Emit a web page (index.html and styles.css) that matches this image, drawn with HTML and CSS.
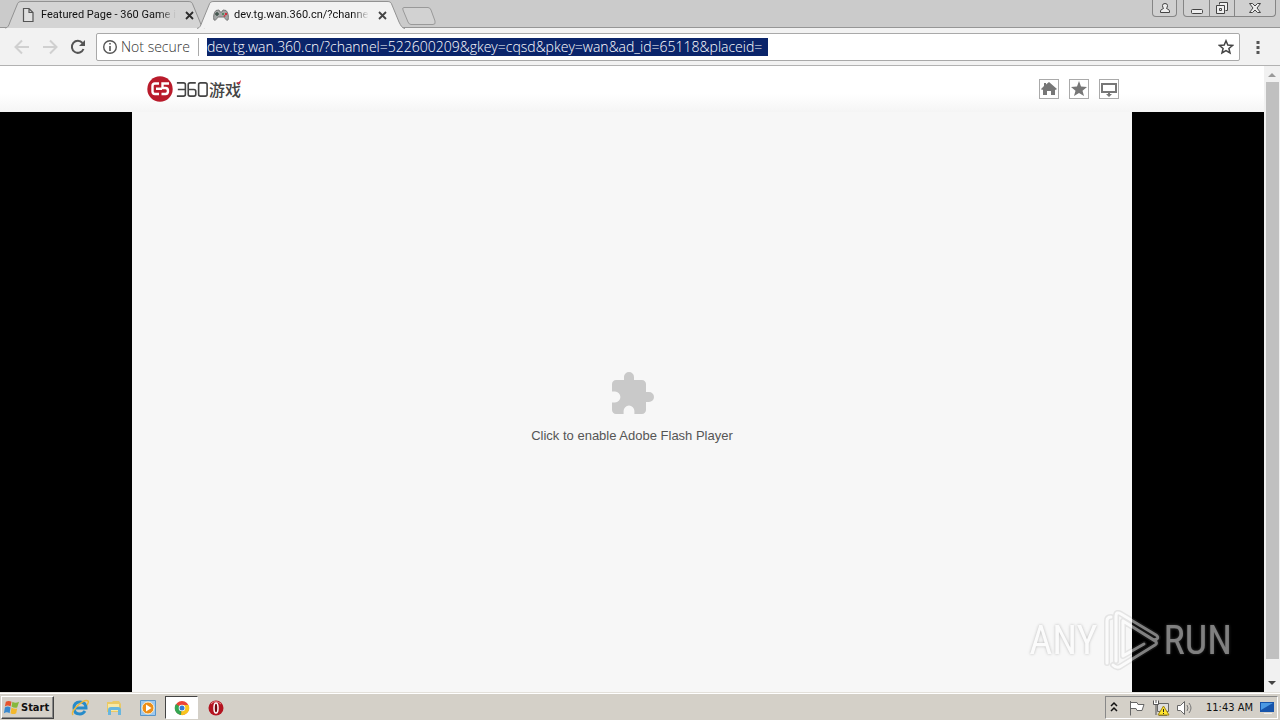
FILE: index.html
```html
<!DOCTYPE html>
<html lang="en">
<head>
<meta charset="utf-8">
<title>dev.tg.wan.360.cn</title>
<link rel="stylesheet" href="styles.css">
</head>
<body>
<header class="tabstrip">
  <div class="tab">
    <svg class="tab-shape" viewBox="0 0 200 28" preserveAspectRatio="none"><path d="M0 28C3 28 4 25 5 22L12 5C13 2 14 1.500 17 1.500H183C186 1.500 187 2 188 5L195 22C196 25 197 28 200 28" fill="#d4d4d4" stroke="#929292"/></svg>
    <svg class="tab-icon" viewBox="0 0 16 16"><path d="M3.500 1.500H9L13 5.500V14.500H3.500ZM9 1.500V5.500H13" fill="#e0e0e0" stroke="#555" stroke-width="1.200"/></svg>
    <span class="tab-title">Featured Page - 360 Game i</span>
    <button class="tab-close" aria-label="Close tab"><svg viewBox="0 0 9 9"><path d="M1 1L8 8M8 1L1 8" stroke="#2c2c2c" stroke-width="1.800"/></svg></button>
  </div>
  <div class="tab tab-active">
    <svg class="tab-shape" viewBox="0 0 208 28" preserveAspectRatio="none"><path d="M0 28.500C3 28 4 25 5 22L12 5C13 2 14 1.500 17 1.500H190C193 1.500 194 2 195 5L202 22C204 26 205 28 208 28.500" fill="#f2f2f2" stroke="#929292"/></svg>
    <svg class="tab-icon" viewBox="0 0 16 16"><path d="M1 13C0 10 1 5 3 3.500L6 3L7 5H9L10 3L13 3.500C15 5 16 10 15 13C13 14 12 11 11 10H5C4 11 3 14 1 13Z" fill="#a3a6a6" stroke="#777"/><path d="M4 5V9M2 7H6" stroke="#3f514a" stroke-width="1.500"/><circle cx="10" cy="7" r="1" fill="#397f4f"/><circle cx="13" cy="7" r="1.200" fill="#d62d3b"/><circle cx="11.500" cy="9" r="1" fill="#c7404a"/></svg>
    <span class="tab-title">dev.tg.wan.360.cn/?channe</span>
    <button class="tab-close" aria-label="Close tab"><svg viewBox="0 0 9 9"><path d="M1 1L8 8M8 1L1 8" stroke="#444" stroke-width="1.800"/></svg></button>
  </div>
  <button class="new-tab" aria-label="New tab"><svg viewBox="0 0 36 20"><path d="M3 1.500H27Q29 1.500 30 4L34 15Q35 18.500 32 18.500H10Q8 18.500 7 16L2 4Q1 1.500 3 1.500Z" fill="#d2d2d2" stroke="#999"/></svg></button>
  <div class="window-controls">
    <button class="profile" aria-label="Profile"><svg viewBox="0 0 12 12"><path d="M1.500 10.500V9Q1.500 7.500 4.500 6.500Q3.500 5 3.500 3.500Q3.500 1.500 6 1.500T8.500 3.500Q8.500 5 7.500 6.500Q10.500 7.500 10.500 9V10.500Z" fill="#eee" stroke="#444"/></svg></button>
    <div class="window-buttons">
      <button aria-label="Minimize"><svg viewBox="0 0 14 14"><rect x="1.500" y="8.500" width="11" height="4" rx="1" fill="#eee" stroke="#444"/></svg></button>
      <button aria-label="Restore"><svg viewBox="0 0 14 14"><path d="M4.500 3.500V1.500H12.500V9.500H10.500" fill="#eee" stroke="#444"/><path d="M1.500 4.500H9.500V12.500H1.500ZM4.500 7.500H6.500V9.500H4.500Z" fill="#eee" stroke="#444"/></svg></button>
      <button class="window-close" aria-label="Close"><svg viewBox="0 0 14 14"><path d="M1.500 2.500H4.500L7 5L9.500 2.500H12.500L9 7L12.500 11.500H9.500L7 9L4.500 11.500H1.500L5 7Z" fill="#eee" stroke="#444"/></svg></button>
    </div>
  </div>
</header>
<nav class="toolbar">
  <button class="nav-button" aria-label="Back"><svg viewBox="0 0 16 16"><path d="M15 8H2M8 1.500L1.500 8L8 14.500" fill="none" stroke="#d0d0d0" stroke-width="2"/></svg></button>
  <button class="nav-button" aria-label="Forward"><svg viewBox="0 0 16 16"><path d="M1 8H14M8 1.500L14.500 8L8 14.500" fill="none" stroke="#d0d0d0" stroke-width="2"/></svg></button>
  <button class="nav-button" aria-label="Reload"><svg viewBox="0 0 16 16"><path d="M13.500 10A6 6 0 1 1 12.500 4" fill="none" stroke="#555" stroke-width="2"/><path d="M15 1V7H9Z" fill="#555"/></svg></button>
  <div class="address">
    <svg class="info" viewBox="0 0 16 16"><circle cx="8" cy="8" r="6.300" fill="none" stroke="#555" stroke-width="1.400"/><path d="M8 7V12M8 4V5.600" stroke="#555" stroke-width="1.600"/></svg>
    <label class="security" for="url">Not secure</label>
    <input class="url" id="url" type="text" spellcheck="false" value="dev.tg.wan.360.cn/?channel=522600209&amp;gkey=cqsd&amp;pkey=wan&amp;ad_id=65118&amp;placeid=">
    <button class="bookmark" aria-label="Bookmark"><svg viewBox="0 0 16 16"><path d="M8 1.800L9.800 6.100L14.500 6.500L10.900 9.500L12 14L8 11.600L4 14L5.100 9.500L1.500 6.500L6.200 6.100Z" fill="none" stroke="#444" stroke-width="1.500"/></svg></button>
  </div>
  <button class="menu" aria-label="Menu"><svg viewBox="0 0 4 14"><path d="M.5 1h3v3h-3zM.5 6h3v3h-3zM.5 11h3v3h-3z" fill="#555"/></svg></button>
</nav>
<main class="viewport">
  <div class="page">
    <div class="site-header">
      <div class="site-inner">
        <a class="logo" href="#" aria-label="360游戏">
          <svg class="logo-mark" viewBox="0 0 26 26"><circle cx="13" cy="13" r="12.700" fill="#b91b2b"/><path d="M12 7.500H8Q5.500 7.500 5.500 10V15.500Q5.500 18 8 18H12M22 7.500H15.500V12H18.500Q21 12 21 15T18.500 18H14.500M9 12.700H15" fill="none" stroke="#fff" stroke-width="2.400"/></svg>
          <svg class="logo-number" viewBox="0 0 34 18"><path d="M1 2H8Q10 2 10 4V14Q10 16 8 16H1M2 9H10M21 2H15Q13 2 13 4V14Q13 16 15 16H19Q21 16 21 14V11Q21 9 19 9H13M26 2H31Q33 2 33 4V14Q33 16 31 16H26Q24 16 24 14V4Q24 2 26 2Z" fill="none" stroke="#444" stroke-width="1.700"/></svg>
          <span class="logo-text">游戏</span>
          <svg class="logo-accent" viewBox="0 0 5 4"><path d="M0 3Q3 3 5 0L4 4Z" fill="#c51f32"/></svg>
        </a>
        <div class="site-actions">
          <button aria-label="Home"><svg viewBox="0 0 18 18"><path d="M9 2L17 9L15.500 10L15 9.600V15H11V11H7V15H3V9.600L2 10L1 9L4 6V3H6V4.500Z" fill="#777"/></svg></button>
          <button aria-label="Favorite"><svg viewBox="0 0 18 18"><path d="M9 1L11 6.500L17 7L12.500 10.800L14 16L9 13L4 16L5.500 10.800L1 7L7 6.500Z" fill="#777"/></svg></button>
          <button aria-label="Desktop"><svg viewBox="0 0 18 18"><path d="M2 4H16V12H2Z" fill="none" stroke="#777" stroke-width="2"/><path d="M8 12H10V14H12L9 17L6 14H8Z" fill="#777"/></svg></button>
        </div>
      </div>
    </div>
    <div class="stage">
      <button class="flash">
        <svg viewBox="0 0 24 24"><path d="M20.500 11H19V7c0-1.100-.9-2-2-2h-4V3.500a2.500 2.500 0 0 0-5 0V5H4c-1.100 0-2 .9-2 2v3.800h1.500a2.700 2.700 0 0 1 0 5.400H2V20c0 1.100.9 2 2 2h3.800v-1.500a2.700 2.700 0 0 1 5.400 0V22H17c1.100 0 2-.9 2-2v-4h1.500a2.500 2.500 0 0 0 0-5z" fill="#c9c9c9"/></svg>
        <span>Click to enable Adobe Flash Player</span>
      </button>
    </div>
  </div>
  <div class="scrollbar">
    <svg viewBox="0 0 16 16"><path d="M4 11L8 7L12 11Z" fill="#999"/></svg>
    <div class="thumb"></div>
    <svg viewBox="0 0 16 16"><path d="M4 5L8 9L12 5Z" fill="#444"/></svg>
  </div>
  <div class="watermark">
    <span>ANY</span>
    <svg viewBox="0 0 60 62"><g fill="none" stroke-linejoin="round" stroke-linecap="round"><path d="M6 53V11Q6 7 10 7M15 51V6Q15 1 20 4L55 25Q58 27 56 29L53 30L22 11V46L43 34M22 11L54 31Q57 33 54 35L20 56Q16 59 12 55" stroke="#777" stroke-opacity=".3" stroke-width="6"/><path d="M6 53V11Q6 7 10 7M15 51V6Q15 1 20 4L55 25Q58 27 56 29L53 30L22 11V46L43 34M22 11L54 31Q57 33 54 35L20 56Q16 59 12 55" stroke="#fff" stroke-width="3"/></g></svg>
    <span>RUN</span>
  </div>
</main>
<footer class="taskbar">
  <button class="start"><svg viewBox="0 0 18 18"><path d="M3 3Q6 1 9 3L8 8Q5 6 2 8Z" fill="#e6532c"/><path d="M10 3Q13 5 17 3L15 9Q12 10 9 8Z" fill="#86b83b"/><path d="M2 9Q5 7 8 9L7 15Q4 13 1 15Z" fill="#3988ce"/><path d="M9 9Q12 11 15 10L14 15Q11 17 8 15Z" fill="#f3b82c"/></svg>Start</button>
  <div class="quick">
    <button aria-label="Internet Explorer"><svg viewBox="0 0 18 18"><path d="M14 12Q12 15 9 15Q3 15 3 9T9 3Q15 3 15 9H5" fill="none" stroke="#278bc9" stroke-width="3"/><path d="M2 16C-1 12 13-1 17 2Q18 3 16 6" fill="none" stroke="#edb83b" stroke-width="1.500"/></svg></button>
    <button aria-label="Explorer"><svg viewBox="0 0 18 18"><path d="M2 3H7L8 2H14L16 5V13H2Z" fill="#eac965"/><path d="M3 5H14V12H3Z" fill="#f8e8a5"/><path d="M3 16V11Q3 8 6 8H13Q16 8 16 11V16H13V11H6V16Z" fill="#68b6de"/></svg></button>
    <button aria-label="Media Player"><svg viewBox="0 0 18 18"><path d="M1.500 1.500H16.500V16.500H1.500Z" fill="#9dc8ee" stroke="#5895c9"/><circle cx="9" cy="9" r="6" fill="#ed8e18" stroke="#fff0cf"/><path d="M7 5.500L12.500 9L7 12.500Z" fill="#fff"/></svg></button>
    <button class="running" aria-label="Chrome"><svg viewBox="0 0 18 18"><circle cx="9" cy="9" r="7" fill="#ed4336"/><path d="M9 9L3 5A7 7 0 0 0 8 16Z" fill="#35a653"/><path d="M9 9L8 16A7 7 0 0 0 15.500 6H9Z" fill="#f8c51d"/><circle cx="9" cy="9" r="3.300" fill="#fff"/><circle cx="9" cy="9" r="2.500" fill="#367bd6"/></svg></button>
    <button aria-label="Opera"><svg viewBox="0 0 18 18"><circle cx="9" cy="9" r="7.500" fill="#b41420"/><path d="M4 5Q8 0 14 5" stroke="#e98587" fill="none"/><ellipse cx="9" cy="9" rx="2" ry="5" fill="#70090e" stroke="#fff" stroke-width="1.500"/></svg></button>
  </div>
  <div class="tray">
    <svg class="tray-end" viewBox="0 0 16 16"><path d="M5 6L8 3L11 6M5 11L8 8L11 11" fill="none" stroke="#111" stroke-width="1.500"/></svg>
    <svg viewBox="0 0 18 18"><path d="M2.500 2V16.500M3 3.500H9L10 5.500H16L14 11.500H9L8 9.500H3" fill="#fff" stroke="#666"/></svg>
    <svg viewBox="0 0 18 18"><path d="M5.500 4.500H16.500V12.500H5.500ZM10 13V16M7 16.500H15" fill="#ddd" stroke="#666"/><path d="M1.500 1.500V5.500H6.500V1.500M4 1V4M4 6V16" fill="#fff" stroke="#555"/><path d="M11.500 7L17 16H6Z" fill="#ffe52e" stroke="#9e8418"/><path d="M11.500 10V13M11.500 14V15" stroke="#222"/></svg>
    <svg viewBox="0 0 18 18"><path d="M1.500 6.500H4.500L8.500 2.500V15.500L4.500 11.500H1.500Z" fill="#fff" stroke="#666"/><path d="M11 6Q13 9 11 12M13 4Q17 9 13 14" fill="none" stroke="#777"/></svg>
    <time>11:43 AM</time>
    <svg class="tray-end" viewBox="0 0 16 14"><path d="M1 1H15V11H1Z" fill="#1754aa"/><path d="M2 2H14L2 9Z" fill="#4b99e3"/><path d="M5 12H13V13H5Z" fill="#eee"/></svg>
  </div>
</footer>
</body>
</html>
```
FILE: styles.css
```css
* { box-sizing: border-box; }
body {
  margin: 0;
  height: 100vh;
  display: flex;
  flex-direction: column;
  overflow: hidden;
  font-family: "Noto Sans", sans-serif;
  color: #111;
}
button { margin: 0; padding: 0; border: 0; background: none; font: inherit; color: inherit; }
svg { display: block; flex: none; }

.tabstrip { display: flex; flex: none; height: 28px; padding-left: 5px; background: #cbcbcb; box-shadow: inset 0 -1px #969696; }
.tab { position: relative; flex: none; display: flex; align-items: center; width: 200px; height: 28px; padding: 2px 11px 0 15px; }
.tab-active { width: 208px; margin-left: -8px; padding-left: 16px; z-index: 1; }
.tab-active .tab-close { margin-right: 7px; }
.tab-shape { position: absolute; inset: 0; width: 100%; height: 100%; overflow: visible; }
.tab-icon, .tab-title, .tab-close { position: relative; }
.tab-icon { width: 16px; height: 16px; margin-right: 5px; }
.tab-title {
  flex: 1;
  min-width: 0;
  font: 11px/16px Roboto, sans-serif;
  white-space: nowrap;
  mask-image: linear-gradient(to right, #000 88%, transparent);
}
.tab-close { display: grid; place-items: center; width: 10px; height: 16px; margin-left: 8px; }
.tab-close svg { width: 9px; height: 9px; }
.new-tab { margin: 6px 0 0 -4px; width: 36px; height: 20px; flex: none; z-index: 2; }
.window-controls { display: flex; gap: 6px; margin-left: auto; padding-right: 4px; height: 17px; }
.profile, .window-buttons { border: 1px solid #858585; border-top: 0; border-radius: 0 0 4px 4px; background: #d0d0d0; }
.profile { width: 25px; display: grid; place-items: center; }
.profile svg { width: 12px; height: 12px; }
.window-buttons { display: flex; }
.window-buttons button { width: 25px; display: grid; place-items: center; }
.window-buttons button + button { border-left: 1px solid #858585; }
.window-buttons .window-close { width: 41px; }
.window-buttons svg { width: 14px; height: 14px; }

.toolbar { display: flex; align-items: center; flex: none; height: 38px; padding: 0 20px 0 14px; background: #f2f2f2; border-bottom: 1px solid #b2b2b2; }
.nav-button { width: 16px; height: 16px; margin-right: 12px; }
.nav-button:nth-child(3) { margin-right: 10px; }
.address { display: flex; align-items: center; flex: 1; height: 28px; padding: 0 5px; border: 1px solid #a9a9a9; border-radius: 2px; background: #fff; }
.info { width: 16px; height: 16px; }
.security { padding-right: 8px; margin: 0 8px 0 3px; border-right: 1px solid #aaa; font: 300 14px/18px "Open Sans", sans-serif; color: #333; white-space: nowrap; }
.url { width: 561px; height: 18px; padding: 0; border: 0; outline: 0; background: #0a246a; color: #fff; font: 300 14px/18px "Open Sans", sans-serif; }
.bookmark { width: 16px; height: 16px; margin-left: auto; }
.menu { width: 4px; height: 14px; margin-left: 16px; }
.menu svg { width: 4px; height: 14px; }

.viewport { position: relative; display: flex; flex: 1; min-height: 0; }
.page { display: flex; flex: 1; flex-direction: column; background: #000; }
.site-header { height: 46px; background: linear-gradient(#fff 60%, #f5f5f5); }
.site-inner { display: flex; align-items: center; justify-content: space-between; max-width: 1000px; height: 100%; margin: 0 auto; padding: 0 13px 0 15px; }
.logo { position: relative; display: flex; align-items: center; color: #444; text-decoration: none; }
.logo-mark { width: 26px; height: 26px; margin-right: 2px; }
.logo-number { width: 34px; height: 17px; }
.logo-text { font: 500 16px/20px "Noto Sans CJK SC", sans-serif; }
.logo-accent { position: absolute; top: 4px; right: 0; width: 5px; height: 4px; }
.site-actions { display: flex; gap: 10px; }
.site-actions button { width: 20px; height: 20px; border: 1px solid #aaa; background: #fff; }
.stage { display: flex; flex: 1; width: 100%; max-width: 1000px; margin: 0 auto; background: #f7f7f7; }
.flash { display: flex; flex: 1; flex-direction: column; align-items: center; justify-content: center; gap: 9px; padding-top: 11px; font: 13px/18px "Liberation Sans", sans-serif; color: #555; }
.flash svg { width: 48px; height: 48px; }
.scrollbar { display: flex; flex-direction: column; width: 16px; background: #f1f1f1; }
.scrollbar svg { width: 16px; height: 16px; }
.thumb { flex: 1; margin: 0 1px 17px 2px; background: #c0c0c0; }
.watermark { position: absolute; right: 48px; bottom: 20px; display: flex; align-items: center; gap: 3px; font: 400 40px/62px "Roboto Condensed", "Liberation Sans Narrow", Roboto, sans-serif; color: #fff; opacity: .5; }
.watermark svg { width: 60px; height: 62px; }
.watermark span { text-shadow: 0 0 3px #777; }

.taskbar { display: flex; align-items: center; flex: none; height: 28px; padding: 2px 2px 0 1px; background: #d4d0c8; border-top: 1px solid #e3e0da; box-shadow: inset 0 1px #fff; }
.start { display: flex; align-items: center; gap: 1px; height: 23px; width: 53px; padding-left: 1px; border: 1px solid; border-color: #fff #444 #444 #fff; box-shadow: inset -1px -1px #888; font: bold 11px/16px "DejaVu Sans Condensed", sans-serif; }
.start svg { width: 17px; height: 17px; }
.quick { display: flex; align-items: center; gap: 1px; margin-left: 9px; }
.quick button { display: grid; place-items: center; width: 33px; height: 23px; }
.quick svg { width: 18px; height: 18px; }
.quick .running { border: 1px solid; border-color: #444 #fff #fff #444; background: #fff; }
.tray { display: flex; align-items: center; gap: 6px; height: 23px; margin-left: auto; padding: 0 2px 0 0; border: 1px solid; border-color: #888 #fff #fff #888; }
.tray svg { width: 18px; height: 18px; }
.tray .tray-end { width: 16px; }
.tray time { margin-left: 6px; font: 11px/16px "DejaVu Sans Condensed", sans-serif; white-space: nowrap; }
```
